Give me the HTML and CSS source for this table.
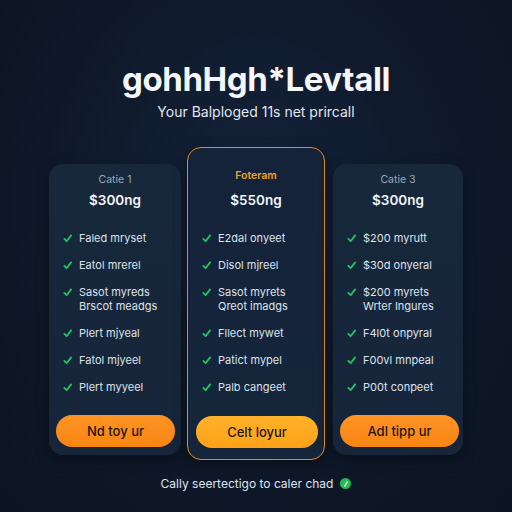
FILE: index.html
```html
<!DOCTYPE html>
<html>
<head>
<meta charset="utf-8">
<link rel="stylesheet" href="styles.css">
</head>
<body>
<div class="page">
  <header class="hero">
    <h1 class="title">gohhHgh*Levtall</h1>
    <p class="subtitle">Your Balploged 11s net prircall</p>
  </header>
  <div class="plans">
    <div class="card side">
      <div class="tier">Catie 1</div>
      <div class="price">$300ng</div>
      <ul class="features">
        <li><svg class="check" viewBox="0 0 10 10"><path d="M1.5 5.5 L4 8 L9 1.5"/></svg><span>Faled mryset</span></li>
        <li><svg class="check" viewBox="0 0 10 10"><path d="M1.5 5.5 L4 8 L9 1.5"/></svg><span>Eatol mrerel</span></li>
        <li><svg class="check" viewBox="0 0 10 10"><path d="M1.5 5.5 L4 8 L9 1.5"/></svg><span>Sasot myreds<br>Brscot meadgs</span></li>
        <li><svg class="check" viewBox="0 0 10 10"><path d="M1.5 5.5 L4 8 L9 1.5"/></svg><span>Plert mjyeal</span></li>
        <li><svg class="check" viewBox="0 0 10 10"><path d="M1.5 5.5 L4 8 L9 1.5"/></svg><span>Fatol mjyeel</span></li>
        <li><svg class="check" viewBox="0 0 10 10"><path d="M1.5 5.5 L4 8 L9 1.5"/></svg><span>Plert myyeel</span></li>
      </ul>
      <button class="btn">Nd toy ur</button>
    </div>
    <div class="card featured">
      <div class="tier">Foteram</div>
      <div class="price">$550ng</div>
      <ul class="features">
        <li><svg class="check" viewBox="0 0 10 10"><path d="M1.5 5.5 L4 8 L9 1.5"/></svg><span>E2dal onyeet</span></li>
        <li><svg class="check" viewBox="0 0 10 10"><path d="M1.5 5.5 L4 8 L9 1.5"/></svg><span>Disol mjreel</span></li>
        <li><svg class="check" viewBox="0 0 10 10"><path d="M1.5 5.5 L4 8 L9 1.5"/></svg><span>Sasot myrets<br>Qreot imadgs</span></li>
        <li><svg class="check" viewBox="0 0 10 10"><path d="M1.5 5.5 L4 8 L9 1.5"/></svg><span>Fllect mywet</span></li>
        <li><svg class="check" viewBox="0 0 10 10"><path d="M1.5 5.5 L4 8 L9 1.5"/></svg><span>Patict mypel</span></li>
        <li><svg class="check" viewBox="0 0 10 10"><path d="M1.5 5.5 L4 8 L9 1.5"/></svg><span>Palb cangeet</span></li>
      </ul>
      <button class="btn">Celt loyur</button>
    </div>
    <div class="card side right">
      <div class="tier">Catie 3</div>
      <div class="price">$300ng</div>
      <ul class="features">
        <li><svg class="check" viewBox="0 0 10 10"><path d="M1.5 5.5 L4 8 L9 1.5"/></svg><span>$200 myrutt</span></li>
        <li><svg class="check" viewBox="0 0 10 10"><path d="M1.5 5.5 L4 8 L9 1.5"/></svg><span>$30d onyeral</span></li>
        <li><svg class="check" viewBox="0 0 10 10"><path d="M1.5 5.5 L4 8 L9 1.5"/></svg><span>$200 myrets<br>Wrter Ingures</span></li>
        <li><svg class="check" viewBox="0 0 10 10"><path d="M1.5 5.5 L4 8 L9 1.5"/></svg><span>F4l0t onpyral</span></li>
        <li><svg class="check" viewBox="0 0 10 10"><path d="M1.5 5.5 L4 8 L9 1.5"/></svg><span>F00vl mnpeal</span></li>
        <li><svg class="check" viewBox="0 0 10 10"><path d="M1.5 5.5 L4 8 L9 1.5"/></svg><span>P00t conpeet</span></li>
      </ul>
      <button class="btn">Adl tipp ur</button>
    </div>
  </div>
  <footer class="foot">
    <span>Cally seertectigo to caler chad</span>
    <span class="dot"><svg width="10" height="10" viewBox="0 0 10 10"><path d="M4 7 L6 3" stroke="#ffffff" stroke-width="1.4" stroke-linecap="round" fill="none"/></svg></span>
  </footer>
</div>
</body>
</html>
```

FILE: styles.css
```css
* { box-sizing: border-box; }
html, body { margin: 0; padding: 0; }
body {
  width: 512px;
  height: 512px;
  overflow: hidden;
  background: radial-gradient(ellipse at 50% 40%, #14223a 0%, #0e1828 60%, #0b1422 100%);
  font-family: Inter, "Noto Sans", sans-serif;
  color: #e8ecf2;
}
.page {
  display: flex;
  flex-direction: column;
  align-items: center;
  padding-top: 59px;
}
.hero { text-align: center; }
.title {
  margin: 0;
  font-size: 33px;
  font-weight: 700;
  letter-spacing: -0.4px;
  color: #f4f6f9;
  line-height: 40px;
}
.subtitle {
  margin: 4px 0 0;
  font-size: 14px;
  color: #e2e6ee;
  line-height: 18px;
}
.plans {
  display: flex;
  align-items: flex-start;
  gap: 6px;
  margin-top: 26px;
}
.card {
  width: 132px;
  background: linear-gradient(180deg, #18283b 0%, #16253a 100%);
  border-radius: 14px;
  display: flex;
  flex-direction: column;
  box-shadow: 0 4px 14px rgba(0,0,0,0.35);
}
.card.side {
  height: 291px;
  margin-top: 17px;
  padding: 9px 8px 8px 14px;
}
.card.right {
  width: 130px;
  margin-left: 2px;
}
.card.featured {
  width: 138px;
  height: 313px;
  border: 1.5px solid #dc8a22;
  padding: 21px 8px 11.5px 14px;
  background: linear-gradient(180deg, #142339 0%, #15253a 100%);
}
.tier {
  text-align: center;
  font-size: 10.5px;
  color: #9ba7b7;
  line-height: 14px;
  padding-right: 6px;
}
.featured .tier { color: #f0a022; font-weight: 600; }
.price {
  text-align: center;
  font-size: 13.5px;
  font-weight: 600;
  color: #f4f6f9;
  margin-top: 3px;
  line-height: 20px;
  padding-right: 6px;
}
.featured .price { margin-top: 7px; }
.features {
  list-style: none;
  margin: 21px 0 0;
  padding: 0;
  display: flex;
  flex-direction: column;
  gap: 13px;
}
.featured .features { margin-top: 21px; }
.features li {
  display: flex;
  align-items: flex-start;
  gap: 7px;
  font-size: 11px;
  line-height: 14px;
  color: #dde2ea;
}
.check {
  flex: none;
  width: 9px;
  height: 9px;
  margin-top: 2.5px;
  fill: none;
  stroke: #22c55e;
  stroke-width: 2;
  stroke-linecap: round;
  stroke-linejoin: round;
}
.btn {
  margin-top: auto;
  margin-left: -7px;
  width: 119px;
  height: 32px;
  border: none;
  border-radius: 16px;
  background: linear-gradient(180deg, #ff9424 0%, #f78512 100%);
  color: #1a1612;
  font-family: Inter, "Noto Sans", sans-serif;
  font-size: 13px;
  font-weight: 500;
}
.featured .btn {
  width: 122px;
  margin-left: -6px;
  background: linear-gradient(180deg, #ffb22a 0%, #ffa116 100%);
}
.foot {
  margin-top: 16px;
  display: flex;
  align-items: center;
  gap: 7px;
  font-size: 12px;
  color: #dfe4ec;
}
.dot {
  width: 11px;
  height: 11px;
  border-radius: 50%;
  background: #20bd50;
  display: flex;
  align-items: center;
  justify-content: center;
}
```
